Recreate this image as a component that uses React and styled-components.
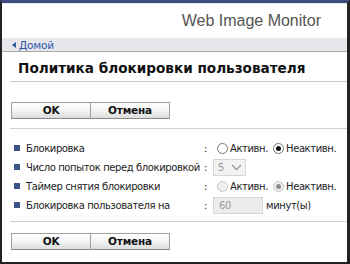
import React from "react";
import styled, { createGlobalStyle } from "styled-components";

const Global = createGlobalStyle`
  html, body { margin: 0; padding: 0; background: #fff; }
  * { box-sizing: border-box; }
`;

const Frame = styled.div`
  width: 350px;
  height: 264px;
  border-top: 3px solid #3d4c7c;
  border-left: 2px solid #222;
  border-right: 3px solid #222;
  border-bottom: 2px solid #222;
  background: #fff;
  display: flex;
  flex-direction: column;
  overflow: hidden;
  font-family: "DejaVu Sans", Verdana, sans-serif;
  color: #222;
`;

const Header = styled.div`
  height: 35px;
  display: flex;
  align-items: center;
  justify-content: flex-end;
  padding-right: 26px;
  font-family: "Liberation Sans", Arial, sans-serif;
  font-size: 16px;
  color: #555;
  border-top: 1px solid #e4e8f0;
`;

const Crumbs = styled.div`
  height: 14px;
  background: #e6e6ec;
  border-bottom: 1px solid #a8a8a8;
  display: flex;
  align-items: center;
  padding-left: 10px;
  font-size: 10.5px;
  letter-spacing: -0.2px;
  color: #2f56a6;
  gap: 3px;
`;

const Arrow = styled.span`
  width: 0;
  height: 0;
  border-top: 3px solid transparent;
  border-bottom: 3px solid transparent;
  border-right: 4px solid #2f56a6;
`;

const Content = styled.div`
  padding-left: 8px;
  display: flex;
  flex-direction: column;
`;

const Title = styled.h1`
  margin: 0;
  height: 30px;
  display: flex;
  align-items: center;
  padding-left: 8px;
  padding-top: 2px;
  font-size: 13.6px;
  font-weight: bold;
  color: #111;
  border-bottom: 1px solid #c8c8c8;
`;

const ButtonBar = styled.div`
  display: flex;
  padding: ${(p) => p.$pad};
  border-bottom: ${(p) => (p.$line ? "1px solid #d0d0d0" : "none")};
`;

const Btn = styled.button`
  width: 80px;
  height: 17px;
  padding: 0;
  margin: 0;
  margin-left: ${(p) => (p.$first ? "1px" : "-1px")};
  border: 1px solid #a0a0a0;
  border-bottom-color: #8a8a8a;
  background: linear-gradient(#ffffff 0%, #f4f4f4 50%, #dcdcdc 100%);
  font-family: "DejaVu Sans", Verdana, sans-serif;
  font-size: 10.5px;
  letter-spacing: -0.2px;
  font-weight: bold;
  color: #111;
  line-height: 15px;
`;

const Rows = styled.div`
  padding: 10px 0 6px 0;
  border-bottom: 1px solid #d0d0d0;
  display: grid;
  grid-template-columns: 194px 9px auto;
  align-items: center;
  font-size: 10px;
  letter-spacing: -0.4px;
`;

const Label = styled.div`
  display: flex;
  align-items: center;
  height: ${(p) => p.$h}px;
  padding-left: 4px;
  gap: 6px;
  white-space: nowrap;
`;

const Bullet = styled.span`
  width: 6px;
  height: 6px;
  background: #3b5488;
  flex: none;
`;

const Colon = styled.div`
  text-align: left;
`;

const Ctrl = styled.div`
  display: flex;
  align-items: center;
  white-space: nowrap;
`;

const RadioItem = styled.label`
  display: flex;
  align-items: center;
  gap: 2px;
  margin-left: ${(p) => (p.$first ? "4px" : "5px")};
  color: #222;
`;

const Circle = styled.span`
  width: 11px;
  height: 11px;
  border-radius: 50%;
  border: 1px solid ${(p) => (p.$disabled ? "#c4c4c4" : "#777")};
  background: ${(p) => (p.$disabled ? "#f0f0f0" : "#fff")};
  display: flex;
  align-items: center;
  justify-content: center;
  &::after {
    content: "";
    width: 5px;
    height: 5px;
    border-radius: 50%;
    background: ${(p) => (p.$disabled ? "#8a8a8a" : "#111")};
    display: ${(p) => (p.$checked ? "block" : "none")};
  }
`;

const Select = styled.div`
  width: 33px;
  height: 17px;
  border: 1px solid #d6d6d6;
  background: #f2f2f2;
  display: flex;
  align-items: center;
  justify-content: space-between;
  padding: 0 3px 0 4px;
  color: #999;
`;

const Input = styled.div`
  width: 50px;
  height: 17px;
  border: 1px solid #d6d6d6;
  background: #ececec;
  display: flex;
  align-items: center;
  padding-left: 5px;
  color: #999;
`;

const Unit = styled.span`
  margin-left: 3px;
`;

function Radio({ label, checked, disabled, first }) {
  return (
    <RadioItem $first={first}>
      <Circle $checked={checked} $disabled={disabled} />
      {label}
    </RadioItem>
  );
}

export default function App() {
  return (
    <>
      <Global />
      <Frame>
        <Header>Web Image Monitor</Header>
        <Crumbs>
          <Arrow />
          Домой
        </Crumbs>
        <Content>
          <Title>Политика блокировки пользователя</Title>
          <ButtonBar $pad="20px 0 9px 0" $line>
            <Btn $first>OK</Btn>
            <Btn>Отмена</Btn>
          </ButtonBar>
          <Rows>
            <Label $h={18}>
              <Bullet />
              Блокировка
            </Label>
            <Colon>:</Colon>
            <Ctrl>
              <Radio label="Активн." first />
              <Radio label="Неактивн." checked />
            </Ctrl>

            <Label $h={20}>
              <Bullet />
              Число попыток перед блокировкой
            </Label>
            <Colon>:</Colon>
            <Ctrl>
              <Select>
                5
                <svg width="11" height="7" viewBox="0 0 11 7">
                  <path d="M1 1 L5.5 5.5 L10 1" fill="none" stroke="#999" strokeWidth="1.3" />
                </svg>
              </Select>
            </Ctrl>

            <Label $h={18}>
              <Bullet />
              Таймер снятия блокировки
            </Label>
            <Colon>:</Colon>
            <Ctrl>
              <Radio label="Активн." first disabled />
              <Radio label="Неактивн." checked disabled />
            </Ctrl>

            <Label $h={20}>
              <Bullet />
              Блокировка пользователя на
            </Label>
            <Colon>:</Colon>
            <Ctrl>
              <Input>60</Input>
              <Unit>минут(ы)</Unit>
            </Ctrl>
          </Rows>
          <ButtonBar $pad="11px 0 0 0">
            <Btn $first>OK</Btn>
            <Btn>Отмена</Btn>
          </ButtonBar>
        </Content>
      </Frame>
    </>
  );
}
